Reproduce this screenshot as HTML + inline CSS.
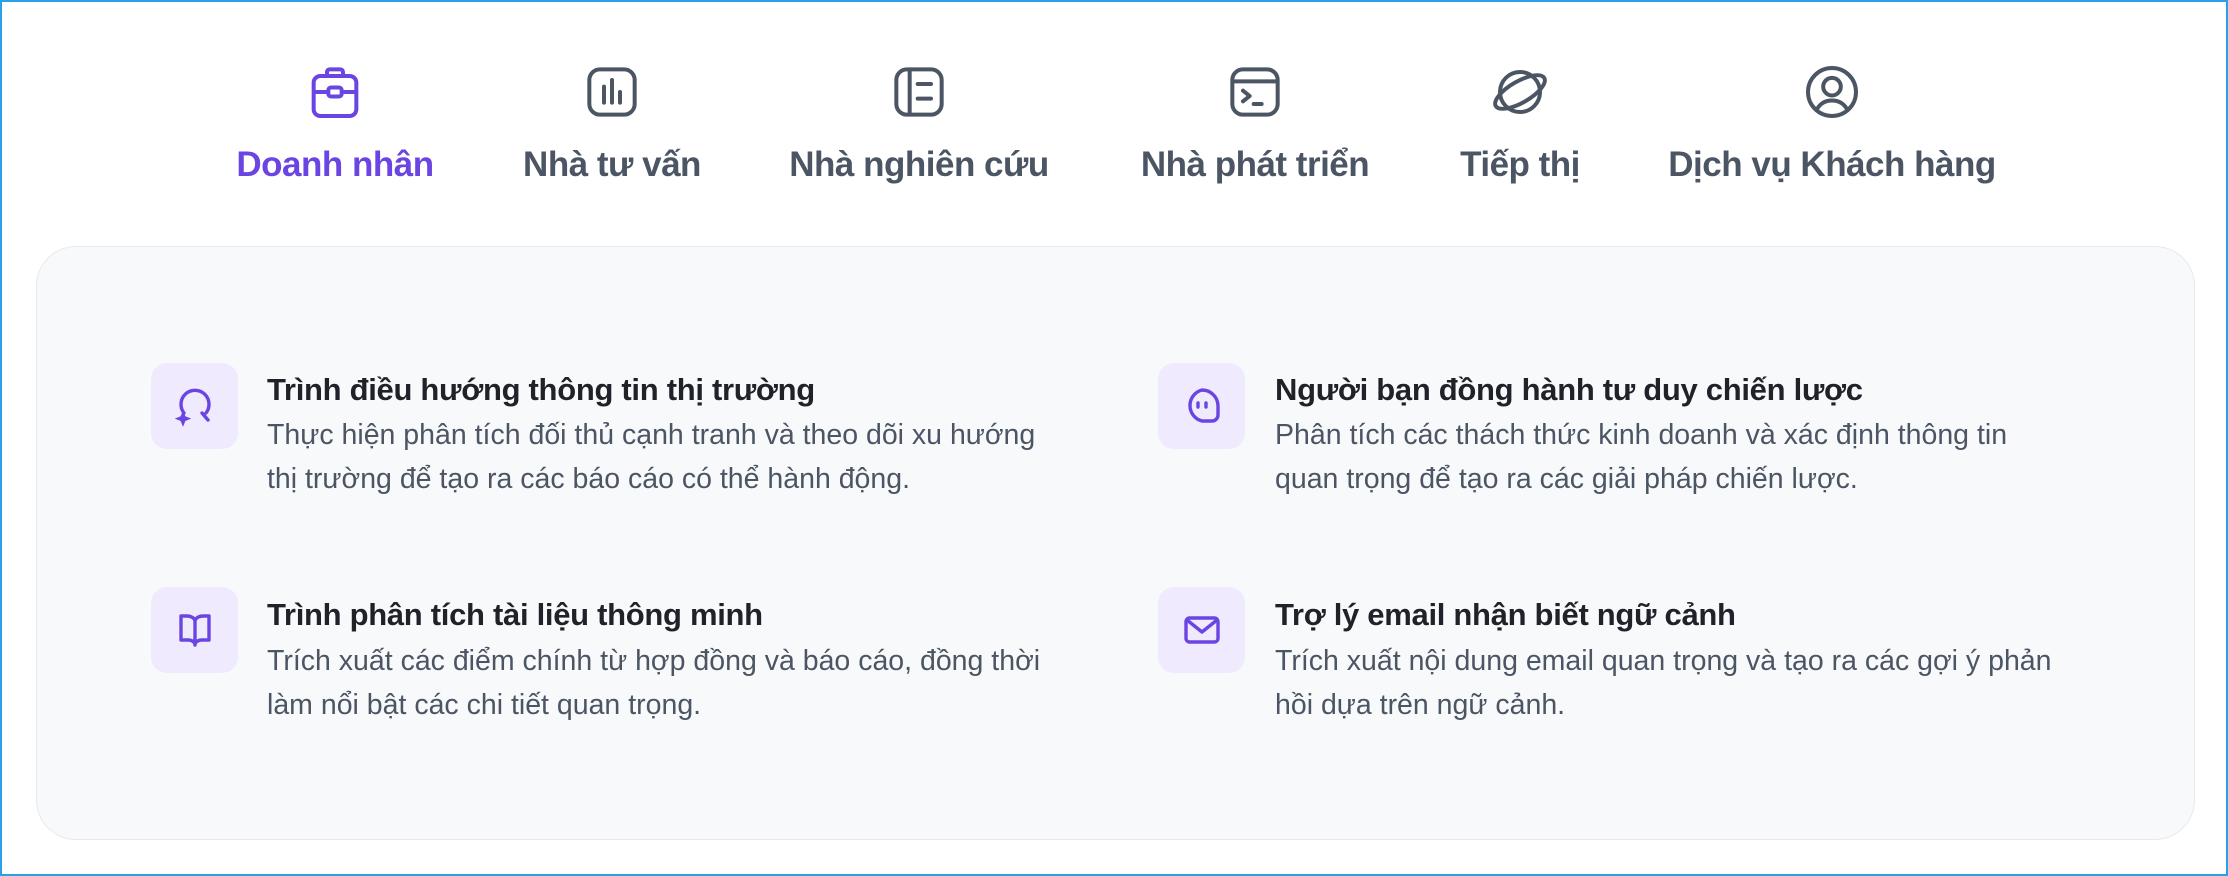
<!DOCTYPE html>
<html><head><meta charset="utf-8"><style>
*{margin:0;padding:0;box-sizing:border-box}
body{width:2228px;height:876px;background:#fff;font-family:"Liberation Sans","DejaVu Sans",sans-serif;position:relative;overflow:hidden}
.frame{position:absolute;left:0;top:0;width:2228px;height:876px;border:2px solid #2aa0e8}
.tab{position:absolute;top:0;text-align:center;transform:translateX(-50%);color:#4b5563}
.tab svg{position:absolute;left:50%;top:60px;margin-left:-32px}
.tab span{position:absolute;top:145px;left:50%;transform:translateX(-50%);white-space:nowrap;font-size:35px;font-weight:bold;letter-spacing:-0.5px}
.tab.act{color:#6a45e2}
.panel{position:absolute;left:36px;top:246px;width:2159px;height:594px;background:#f8f9fb;border:1px solid #e7e9ee;border-radius:40px}
.ib{position:absolute;width:87px;height:86px;background:#efeafe;border-radius:16px;display:flex;align-items:center;justify-content:center}
.t{position:absolute;font-size:31px;font-weight:bold;color:#1f2229;white-space:nowrap;letter-spacing:-0.3px}
.d{position:absolute;font-size:28.5px;color:#4b5563;line-height:44px;white-space:nowrap}
</style></head><body>
<div class="frame"></div>

<div class="tab act" style="left:335px"><svg width="64" height="64" viewBox="0 0 24 24" fill="none" stroke="#6a45e2" stroke-width="1.5" stroke-linejoin="round"><rect x="4" y="6" width="16" height="15" rx="2.5"/><path d="M9 6V4.5c0-.5.4-1 1-1h4c.6 0 1 .5 1 1V6"/><path d="M4 12h16"/><rect x="9.5" y="10.3" width="5" height="3.4" rx="1" fill="#fff"/></svg><span>Doanh nhân</span></div>

<div class="tab" style="left:612px"><svg width="64" height="64" viewBox="0 0 24 24" fill="none" stroke="#4b5563" stroke-width="1.5" stroke-linecap="round"><rect x="3.5" y="3.5" width="17" height="17" rx="4"/><path d="M9 10v6M12 7.5v8.5M15 12v4"/></svg><span>Nhà tư vấn</span></div>

<div class="tab" style="left:919px"><svg width="64" height="64" viewBox="0 0 24 24" fill="none" stroke="#4b5563" stroke-width="1.5" stroke-linecap="round"><rect x="3.5" y="3.5" width="17" height="17" rx="4"/><path d="M8.5 4v16M11.5 9h5M11.5 14.5h5"/></svg><span>Nhà nghiên cứu</span></div>

<div class="tab" style="left:1255px"><svg width="64" height="64" viewBox="0 0 24 24" fill="none" stroke="#4b5563" stroke-width="1.5" stroke-linecap="round" stroke-linejoin="round"><rect x="3.5" y="3.5" width="17" height="17" rx="4"/><path d="M4 8h16M7.5 11.5l2.5 2-2.5 2M11.5 16.5h3"/></svg><span>Nhà phát triển</span></div>

<div class="tab" style="left:1520px"><svg width="64" height="64" viewBox="0 0 24 24" fill="none" stroke="#4b5563" stroke-width="1.5" stroke-linecap="round"><circle cx="12" cy="12" r="7.5"/><ellipse cx="12" cy="12" rx="10.5" ry="4" transform="rotate(-30 12 12)"/></svg><span>Tiếp thị</span></div>

<div class="tab" style="left:1832px"><svg width="64" height="64" viewBox="0 0 24 24" fill="none" stroke="#4b5563" stroke-width="1.5" stroke-linecap="round"><circle cx="12" cy="12" r="9"/><circle cx="12" cy="10" r="3.3"/><path d="M6.2 18.8c1.2-2.4 3.3-3.6 5.8-3.6s4.6 1.2 5.8 3.6"/></svg><span>Dịch vụ Khách hàng</span></div>

<div class="panel"></div>

<div class="ib" style="left:151px;top:363px"><svg width="48" height="48" viewBox="0 0 24 24" fill="none" stroke="#6a45e2" stroke-width="1.7" stroke-linecap="round"><path d="M6.5 15.5a7 7 0 1 1 11 0"/><path d="M15.5 15.5l3 3.5"/><path d="M6 15.5l.8 2 2 .8-2 .8-.8 2-.8-2-2-.8 2-.8z" fill="#6a45e2" stroke-width="1"/></svg></div>
<div class="t" style="left:267px;top:372px">Trình điều hướng thông tin thị trường</div>
<div class="d" style="left:267px;top:413px">Thực hiện phân tích đối thủ cạnh tranh và theo dõi xu hướng<br>thị trường để tạo ra các báo cáo có thể hành động.</div>

<div class="ib" style="left:151px;top:587px"><svg width="48" height="48" viewBox="0 0 24 24" fill="none" stroke="#6a45e2" stroke-width="1.7" stroke-linecap="round" stroke-linejoin="round"><path d="M12 7c-1-1.5-2.5-2-4-2H5v12h3.5c1.5 0 2.8.6 3.5 1.8C12.7 17.6 14 17 15.5 17H19V5h-3c-1.5 0-3 .5-4 2z"/><path d="M12 7v12.5"/></svg></div>
<div class="t" style="left:267px;top:597px">Trình phân tích tài liệu thông minh</div>
<div class="d" style="left:267px;top:639px">Trích xuất các điểm chính từ hợp đồng và báo cáo, đồng thời<br>làm nổi bật các chi tiết quan trọng.</div>

<div class="ib" style="left:1158px;top:363px"><svg width="48" height="48" viewBox="0 0 24 24" fill="none" stroke="#6a45e2" stroke-width="1.7" stroke-linecap="round"><path d="M12 4a8 8 0 0 1 8 8v4.5a3 3 0 0 1-3 3h-5a8 8 0 0 1 0-15.5z"/><path d="M10 10.5v2M14 10.5v2"/></svg></div>
<div class="t" style="left:1275px;top:372px">Người bạn đồng hành tư duy chiến lược</div>
<div class="d" style="left:1275px;top:413px">Phân tích các thách thức kinh doanh và xác định thông tin<br>quan trọng để tạo ra các giải pháp chiến lược.</div>

<div class="ib" style="left:1158px;top:587px"><svg width="48" height="48" viewBox="0 0 24 24" fill="none" stroke="#6a45e2" stroke-width="1.7" stroke-linecap="round" stroke-linejoin="round"><rect x="4" y="6" width="16" height="12" rx="1.8"/><path d="M4.5 7l7.5 6 7.5-6"/></svg></div>
<div class="t" style="left:1275px;top:597px">Trợ lý email nhận biết ngữ cảnh</div>
<div class="d" style="left:1275px;top:639px">Trích xuất nội dung email quan trọng và tạo ra các gợi ý phản<br>hồi dựa trên ngữ cảnh.</div>
</body></html>
